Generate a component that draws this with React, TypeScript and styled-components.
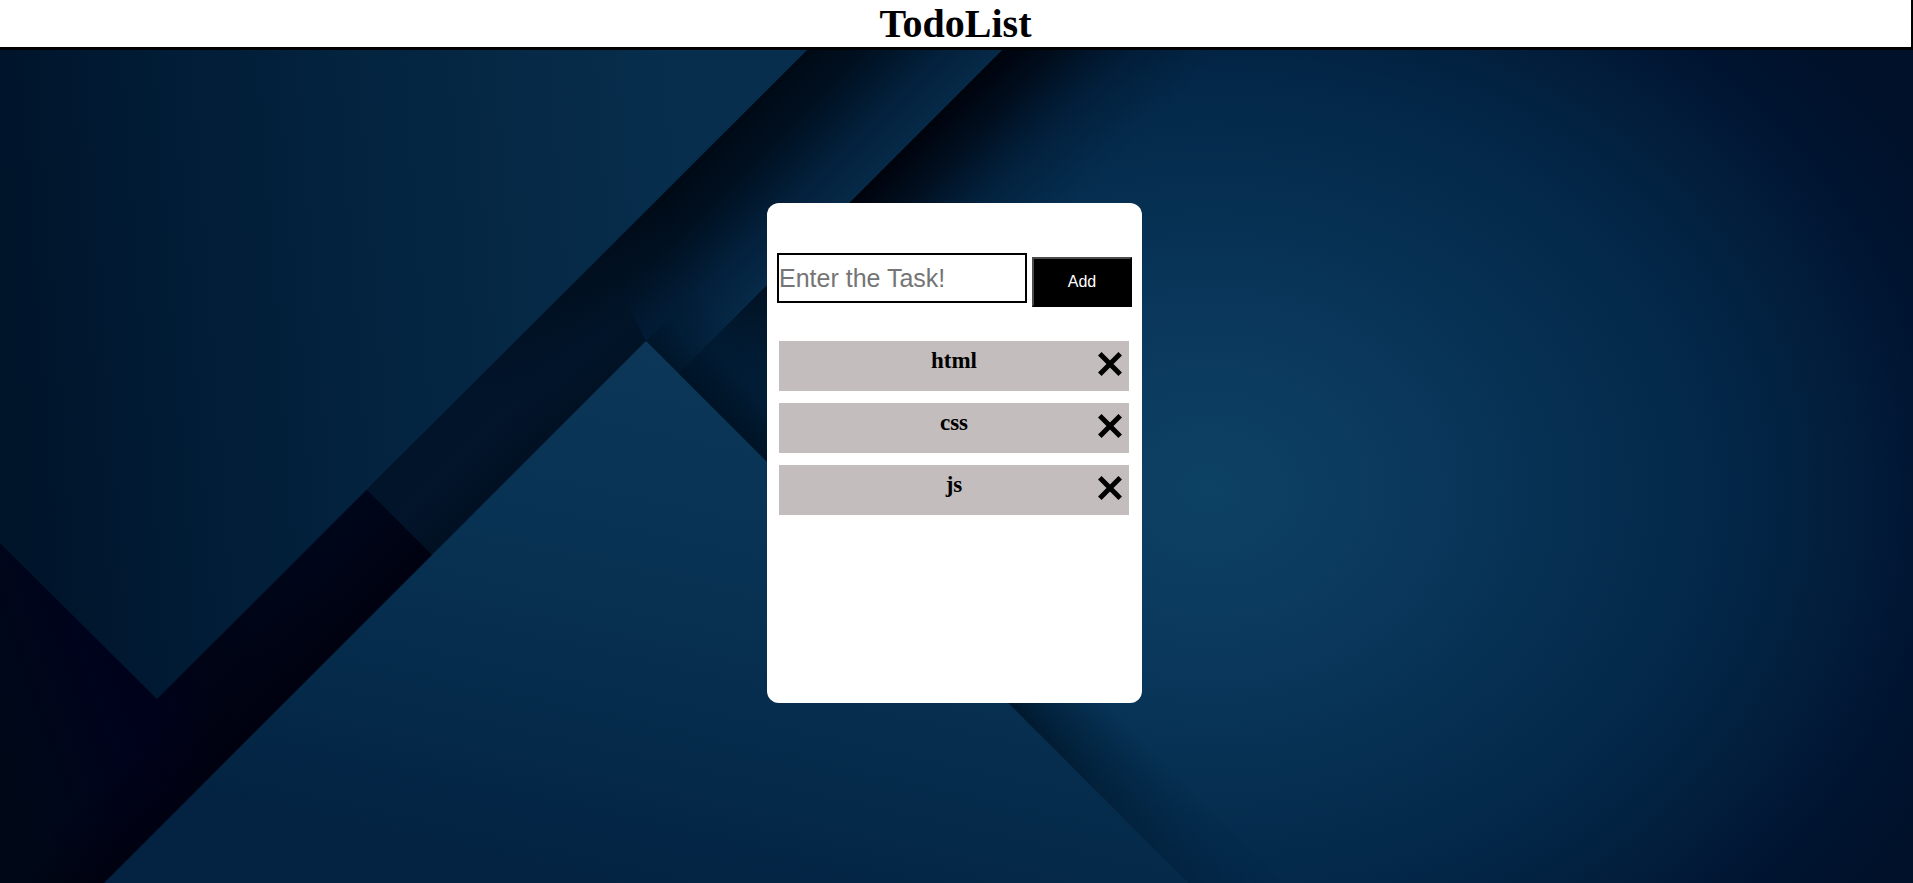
import React, { useState } from "react";
import styled, { createGlobalStyle } from "styled-components";

const GlobalStyle = createGlobalStyle`
  *, *::before, *::after { box-sizing: border-box; }
  body {
    margin: 0;
    background: #021f3c;
    font-family: "Liberation Serif", "Times New Roman", serif;
    color: #000;
  }
`;

const Page = styled.div`
  position: relative;
  isolation: isolate;
  display: flex;
  flex-direction: column;
  min-height: 100vh;
`;

const Backdrop = styled.svg`
  position: absolute;
  inset: 0;
  z-index: -1;
  width: 100%;
  height: 100%;
`;

const Header = styled.header`
  background: #fff;
  border-right: 2px solid #000;
  border-bottom: 3px solid #000;
  text-align: center;
`;

const Title = styled.h1`
  margin: 0;
  font-size: 40px;
  line-height: 47px;
  font-weight: bold;
`;

const Main = styled.main`
  flex: 1;
  display: flex;
  justify-content: center;
  align-items: flex-start;
  padding: 153px 4px 32px 0;
`;

const Card = styled.section`
  width: 375px;
  min-height: 500px;
  padding: 50px 10px 24px;
  border-radius: 12px;
  background: #fff;
`;

const TaskForm = styled.form`
  display: flex;
  align-items: flex-end;
  gap: 5px;
`;

const TaskInput = styled.input`
  flex: 1;
  min-width: 0;
  height: 50px;
  margin: 0 0 4px;
  padding: 0;
  border: 2px solid #000;
  border-radius: 0;
  background: #fff;
  font-family: "Liberation Sans", Arial, sans-serif;
  font-size: 25px;
  color: #000;
  &::placeholder { color: #757575; }
`;

const AddButton = styled.button`
  width: 100px;
  height: 50px;
  padding: 0;
  border: 2px outset #000;
  border-color: #4c4c4c #000 #000 #4c4c4c;
  background: #000;
  color: #fff;
  font-family: "Liberation Sans", Arial, sans-serif;
  font-size: 16px;
  cursor: pointer;
`;

const TaskList = styled.ul`
  display: flex;
  flex-direction: column;
  gap: 12px;
  margin: 34px 3px 0 2px;
  padding: 0;
  list-style: none;
`;

const TaskItem = styled.li`
  display: grid;
  grid-template-columns: 1fr auto 1fr;
  align-items: start;
  height: 50px;
  padding: 7px;
  background: #c4bdbd;
`;

const TaskName = styled.span`
  grid-column: 2;
  font-size: 23px;
  line-height: 26px;
  font-weight: bold;
`;

const RemoveButton = styled.button`
  justify-self: end;
  display: flex;
  padding: 4px 0;
  border: 0;
  background: none;
  color: #000;
  cursor: pointer;
`;

const Cross = () => (
  <svg width="24" height="24" viewBox="0 0 24 24" aria-hidden="true">
    <path
      d="M1.8 1.8 22.2 22.2M22.2 1.8 1.8 22.2"
      fill="none"
      stroke="currentColor"
      strokeWidth="5"
    />
  </svg>
);

/* Overlapping diagonal sheets with soft shadows along their edges. */
const SheetsBackdrop = () => (
  <Backdrop viewBox="0 0 1913 883" preserveAspectRatio="none" aria-hidden="true">
    <defs>
      <radialGradient id="glow" gradientUnits="userSpaceOnUse" cx="0" cy="0" r="1" gradientTransform="translate(1210 490) scale(830 670)">
        <stop offset="0" stopColor="#0d4264" />
        <stop offset="0.22" stopColor="#0b395e" />
        <stop offset="0.42" stopColor="#063052" />
        <stop offset="0.62" stopColor="#032748" />
        <stop offset="0.76" stopColor="#021e3c" />
        <stop offset="0.88" stopColor="#001431" />
        <stop offset="1" stopColor="#001129" />
      </radialGradient>
      <linearGradient id="shadeB" gradientUnits="userSpaceOnUse" x1="526" y1="526" x2="640" y2="640">
        <stop offset="0" stopColor="#00030c" stopOpacity="1" />
        <stop offset="0.25" stopColor="#000814" stopOpacity="0.8" />
        <stop offset="0.6" stopColor="#001226" stopOpacity="0.35" />
        <stop offset="1" stopColor="#001a30" stopOpacity="0" />
      </linearGradient>
      <linearGradient id="fadeB" gradientUnits="userSpaceOnUse" x1="842" y1="210" x2="684" y2="368">
        <stop offset="0" stopColor="#02203a" stopOpacity="0" />
        <stop offset="0.85" stopColor="#02203a" stopOpacity="0.85" />
        <stop offset="1" stopColor="#011429" stopOpacity="0.95" />
      </linearGradient>
      <linearGradient id="strip" gradientUnits="userSpaceOnUse" x1="428" y1="428" x2="526" y2="526">
        <stop offset="0" stopColor="#000a16" />
        <stop offset="0.3" stopColor="#001020" />
        <stop offset="0.7" stopColor="#03203c" />
        <stop offset="1" stopColor="#062a48" />
      </linearGradient>
      <linearGradient id="stripFade" gradientUnits="userSpaceOnUse" x1="700" y1="240" x2="510" y2="430">
        <stop offset="0" stopColor="#02182f" stopOpacity="0" />
        <stop offset="1" stopColor="#02152c" stopOpacity="0.9" />
      </linearGradient>
      <linearGradient id="stripEdge" gradientUnits="userSpaceOnUse" x1="460" y1="460" x2="494" y2="494">
        <stop offset="0" stopColor="#000c1a" stopOpacity="0" />
        <stop offset="1" stopColor="#000c1a" stopOpacity="0.6" />
      </linearGradient>
      <linearGradient id="panelA" gradientUnits="userSpaceOnUse" x1="0" y1="200" x2="680" y2="150">
        <stop offset="0" stopColor="#00142a" />
        <stop offset="0.25" stopColor="#011c36" />
        <stop offset="0.6" stopColor="#042541" />
        <stop offset="1" stopColor="#072e4d" />
      </linearGradient>
      <linearGradient id="corner" gradientUnits="userSpaceOnUse" x1="0" y1="740" x2="340" y2="620">
        <stop offset="0" stopColor="#000818" />
        <stop offset="0.2" stopColor="#00051b" />
        <stop offset="0.4" stopColor="#00021c" />
        <stop offset="0.6" stopColor="#000415" />
        <stop offset="1" stopColor="#000619" />
      </linearGradient>
      <linearGradient id="cornerEdge" gradientUnits="userSpaceOnUse" x1="440" y1="440" x2="494" y2="494">
        <stop offset="0" stopColor="#00000e" stopOpacity="0" />
        <stop offset="1" stopColor="#00000e" stopOpacity="0.8" />
      </linearGradient>
      <linearGradient id="front" gradientUnits="userSpaceOnUse" x1="720" y1="341" x2="600" y2="883">
        <stop offset="0" stopColor="#0c3759" />
        <stop offset="0.4" stopColor="#083253" />
        <stop offset="0.75" stopColor="#052a4a" />
        <stop offset="1" stopColor="#042342" />
      </linearGradient>
      <linearGradient id="frontShade" gradientUnits="userSpaceOnUse" x1="153" y1="-153" x2="200" y2="-200">
        <stop offset="0" stopColor="#001426" stopOpacity="0.85" />
        <stop offset="0.5" stopColor="#001a30" stopOpacity="0.45" />
        <stop offset="1" stopColor="#001a30" stopOpacity="0" />
      </linearGradient>
      <linearGradient id="frontShadeFade" gradientUnits="userSpaceOnUse" x1="0" y1="700" x2="0" y2="883">
        <stop offset="0" stopColor="#fff" />
        <stop offset="1" stopColor="#333" />
      </linearGradient>
      <mask id="shadeMask" maskUnits="userSpaceOnUse" x="0" y="0" width="1913" height="883">
        <rect width="1913" height="883" fill="url(#frontShadeFade)" />
      </mask>
    </defs>
    <rect width="1913" height="883" fill="url(#glow)" />
    <path d="M1052 0H1300L626 674 367 685Z" fill="url(#shadeB)" />
    <path d="M1052 0H1300L626 674 367 685Z" fill="url(#fadeB)" />
    <path d="M857 0H1052L400 652 150 707Z" fill="url(#strip)" />
    <path d="M857 0H1052L400 652 150 707Z" fill="url(#stripFade)" />
    <path d="M602 255 646 341 432 555 367 490Z" fill="url(#stripEdge)" />
    <path d="M0 500 367 490 480 603 200 883H0Z" fill="url(#corner)" />
    <path d="M367 490 480 603 200 883H0Z" fill="url(#cornerEdge)" />
    <path d="M0 0H857L157 699 0 543Z" fill="url(#panelA)" />
    <path d="M646 341 766 221 1308 883H1188Z" fill="url(#frontShade)" mask="url(#shadeMask)" />
    <path d="M646 341 1188 883H104Z" fill="url(#front)" />
  </Backdrop>
);

export default function App() {
  const [tasks, setTasks] = useState(["html", "css", "js"]);
  const [draft, setDraft] = useState("");

  const addTask = (event: React.FormEvent) => {
    event.preventDefault();
    const name = draft.trim();
    if (!name) return;
    setTasks([...tasks, name]);
    setDraft("");
  };

  return (
    <>
      <GlobalStyle />
      <Page>
        <SheetsBackdrop />
        <Header>
          <Title>TodoList</Title>
        </Header>
        <Main>
          <Card>
            <TaskForm onSubmit={addTask}>
              <TaskInput
                type="text"
                aria-label="Task"
                placeholder="Enter the Task!"
                value={draft}
                onChange={(event) => setDraft(event.target.value)}
              />
              <AddButton type="submit">Add</AddButton>
            </TaskForm>
            <TaskList>
              {tasks.map((task, index) => (
                <TaskItem key={index}>
                  <TaskName>{task}</TaskName>
                  <RemoveButton
                    type="button"
                    aria-label={`Remove ${task}`}
                    onClick={() => setTasks(tasks.filter((_, i) => i !== index))}
                  >
                    <Cross />
                  </RemoveButton>
                </TaskItem>
              ))}
            </TaskList>
          </Card>
        </Main>
      </Page>
    </>
  );
}
